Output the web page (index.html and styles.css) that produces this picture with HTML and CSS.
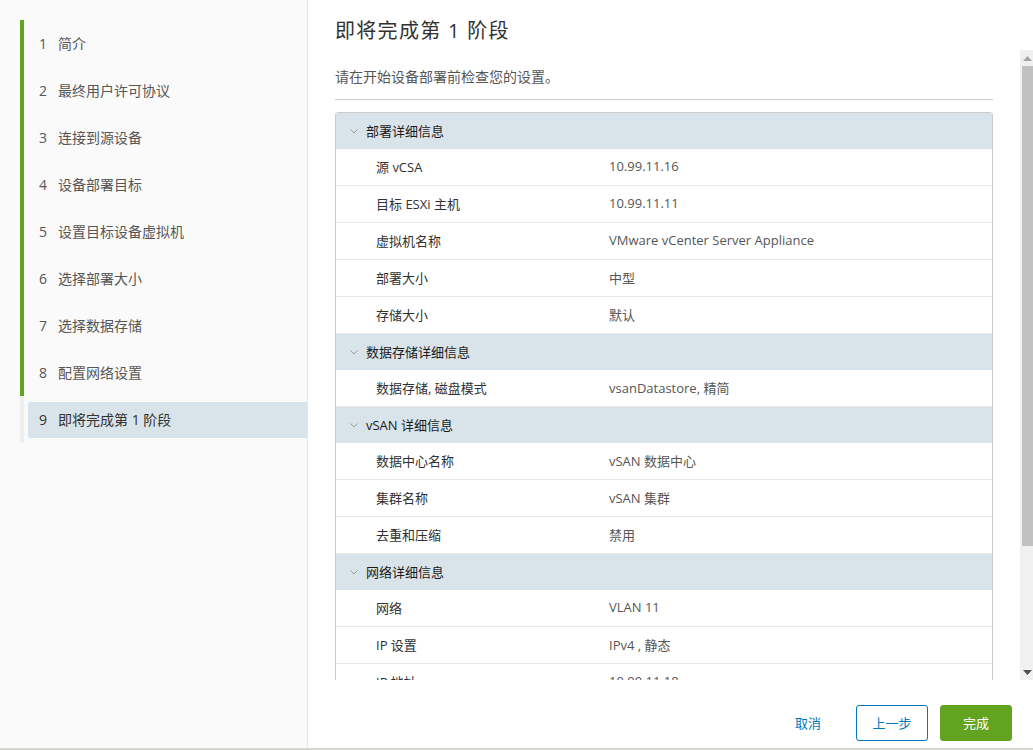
FILE: index.html
```html
<!DOCTYPE html>
<html lang="zh-CN">
<head>
<meta charset="utf-8">
<title>即将完成第 1 阶段</title>
<link rel="stylesheet" href="styles.css">
</head>
<body>
<div class="app">
  <aside class="sidebar">
    <ol class="steps">
      <li class="step done"><div class="step-inner"><span class="num">1</span>简介</div></li>
      <li class="step done"><div class="step-inner"><span class="num">2</span>最终用户许可协议</div></li>
      <li class="step done"><div class="step-inner"><span class="num">3</span>连接到源设备</div></li>
      <li class="step done"><div class="step-inner"><span class="num">4</span>设备部署目标</div></li>
      <li class="step done"><div class="step-inner"><span class="num">5</span>设置目标设备虚拟机</div></li>
      <li class="step done"><div class="step-inner"><span class="num">6</span>选择部署大小</div></li>
      <li class="step done"><div class="step-inner"><span class="num">7</span>选择数据存储</div></li>
      <li class="step done"><div class="step-inner"><span class="num">8</span>配置网络设置</div></li>
      <li class="step current"><div class="step-inner"><span class="num">9</span>即将完成第 1 阶段</div></li>
    </ol>
  </aside>
  <main class="main">
    <h3 class="title">即将完成第 1 阶段</h3>
    <div class="body-area">
      <div class="scroll">
        <p class="intro">请在开始设备部署前检查您的设置。</p>
        <div class="summary">
          <div class="section-head"><svg class="chev" width="8" height="5" viewBox="0 0 8 5"><polyline points="0.5,0.5 4,4 7.5,0.5" fill="none" stroke="#9a9a9a" stroke-width="1"/></svg>部署详细信息</div>
          <div class="row"><span class="label">源 vCSA</span><span class="value">10.99.11.16</span></div>
          <div class="row"><span class="label">目标 ESXi 主机</span><span class="value">10.99.11.11</span></div>
          <div class="row"><span class="label">虚拟机名称</span><span class="value">VMware vCenter Server Appliance</span></div>
          <div class="row"><span class="label">部署大小</span><span class="value">中型</span></div>
          <div class="row"><span class="label">存储大小</span><span class="value">默认</span></div>
          <div class="section-head"><svg class="chev" width="8" height="5" viewBox="0 0 8 5"><polyline points="0.5,0.5 4,4 7.5,0.5" fill="none" stroke="#9a9a9a" stroke-width="1"/></svg>数据存储详细信息</div>
          <div class="row"><span class="label">数据存储, 磁盘模式</span><span class="value">vsanDatastore, 精简</span></div>
          <div class="section-head"><svg class="chev" width="8" height="5" viewBox="0 0 8 5"><polyline points="0.5,0.5 4,4 7.5,0.5" fill="none" stroke="#9a9a9a" stroke-width="1"/></svg>vSAN 详细信息</div>
          <div class="row"><span class="label">数据中心名称</span><span class="value">vSAN 数据中心</span></div>
          <div class="row"><span class="label">集群名称</span><span class="value">vSAN 集群</span></div>
          <div class="row"><span class="label">去重和压缩</span><span class="value">禁用</span></div>
          <div class="section-head"><svg class="chev" width="8" height="5" viewBox="0 0 8 5"><polyline points="0.5,0.5 4,4 7.5,0.5" fill="none" stroke="#9a9a9a" stroke-width="1"/></svg>网络详细信息</div>
          <div class="row"><span class="label">网络</span><span class="value">VLAN 11</span></div>
          <div class="row"><span class="label">IP 设置</span><span class="value">IPv4 , 静态</span></div>
          <div class="row"><span class="label">IP 地址</span><span class="value">10.99.11.18</span></div>
        </div>
      </div>
      <div class="scrollbar" aria-hidden="true">
        <div class="sb-btn"><svg width="9" height="5" viewBox="0 0 9 5"><polygon points="0,5 4.5,0 9,5" fill="#a3a3a3"/></svg></div>
        <div class="sb-thumb"></div>
        <div class="sb-track"></div>
        <div class="sb-btn"><svg width="9" height="5" viewBox="0 0 9 5"><polygon points="0,0 9,0 4.5,5" fill="#505050"/></svg></div>
      </div>
    </div>
    <div class="footer">
      <button class="btn btn-flat">取消</button>
      <button class="btn btn-outline">上一步</button>
      <button class="btn btn-success">完成</button>
    </div>
  </main>
</div>
</body>
</html>
```

FILE: styles.css
```css
* { box-sizing: border-box; }

html, body {
  margin: 0;
  padding: 0;
  background: #ffffff;
}

body {
  font-family: "Open Sans", "Noto Sans CJK SC", sans-serif;
  color: #333333;
  font-size: 13px;
}

.app {
  display: flex;
  width: 1033px;
  height: 750px;
  border-bottom: 2px solid #d6d6d2;
  overflow: hidden;
}

/* Sidebar */
.sidebar {
  width: 308px;
  flex: none;
  background: #fafafa;
  border-right: 1px solid #e6e6e6;
  padding-top: 20px;
}

.steps {
  list-style: none;
  margin: 0 0 0 20px;
  padding: 0;
}

.step {
  height: 47px;
  border-left: 4px solid #eeeeee;
  padding: 6px 0 5px 4px;
}

.step.done {
  border-left-color: #62a420;
}

.step-inner {
  height: 36px;
  display: flex;
  align-items: center;
  padding-left: 11px;
  padding-bottom: 2px;
  font-size: 14px;
  color: #565656;
  border-radius: 3px 0 0 3px;
}

.step.current .step-inner {
  background: #d9e4ea;
  color: #313131;
}

.num {
  display: inline-block;
  width: 19px;
}

/* Main */
.main {
  flex: 1;
  display: flex;
  flex-direction: column;
  min-width: 0;
}

.title {
  margin: 0;
  height: 50px;
  padding: 19px 0 0 27px;
  font-size: 20px;
  line-height: 24px;
  font-weight: 400;
  letter-spacing: 1.3px;
  color: #313131;
}

.body-area {
  height: 630px;
  display: flex;
}

.scroll {
  flex: 1;
  min-width: 0;
  overflow: hidden;
  padding: 0 27px 0 27px;
}

.scrollbar {
  width: 13px;
  flex: none;
  display: flex;
  flex-direction: column;
  background: #f0f0f0;
}

.sb-btn {
  height: 16px;
  flex: none;
  display: flex;
  align-items: center;
  justify-content: center;
  padding-left: 2px;
}

.sb-thumb {
  height: 480px;
  flex: none;
  margin-left: 2px;
  background: #c1c1c1;
}

.sb-track {
  flex: 1;
}

.intro {
  margin: 0;
  padding: 17px 0 12px;
  line-height: 20px;
  font-size: 14px;
  color: #565656;
  border-bottom: 1px solid #cccccc;
}

.summary {
  margin-top: 12px;
  border: 1px solid #cccccc;
  border-radius: 3px;
}

.section-head {
  height: 36px;
  display: flex;
  align-items: center;
  padding-left: 14px;
  padding-bottom: 1px;
  background: #d9e4ea;
  color: #1a1a1a;
  font-size: 13px;
}

.chev {
  flex: none;
  margin-right: 8px;
  margin-top: 1px;
}

.row {
  height: 37px;
  display: grid;
  grid-template-columns: 233px 1fr;
  align-items: center;
  padding-left: 40px;
  padding-bottom: 2px;
  border-bottom: 1px solid #e8e8e8;
  font-size: 13px;
}

.label {
  color: #313131;
}

.value {
  color: #565656;
}

/* Footer */
.footer {
  height: 68px;
  display: flex;
  justify-content: flex-end;
  align-items: flex-start;
  gap: 12px;
  padding: 25px 21px 0 0;
}

.btn {
  width: 72px;
  height: 36px;
  border-radius: 3px;
  font-family: "Open Sans", "Noto Sans CJK SC", sans-serif;
  font-size: 13px;
  cursor: pointer;
  padding: 0 0 2px 0;
}

.btn-flat {
  background: transparent;
  border: 1px solid transparent;
  color: #0079b8;
}

.btn-outline {
  background: #ffffff;
  border: 1px solid #0079b8;
  color: #0079b8;
}

.btn-success {
  background: #62a420;
  border: 1px solid #62a420;
  color: #ffffff;
}
```
